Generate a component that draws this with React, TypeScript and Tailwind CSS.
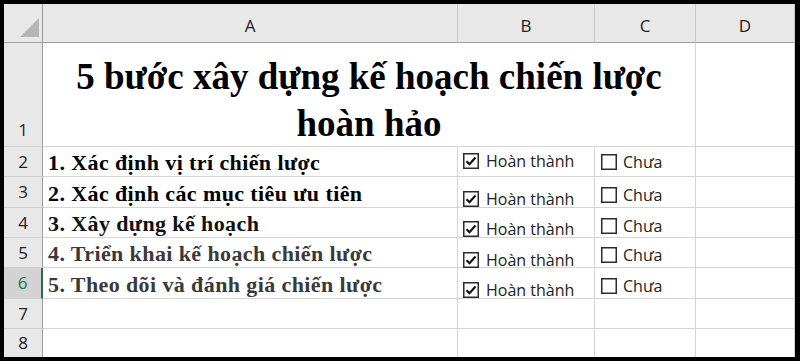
import React from "react";

const ROWS = [
  { n: 2, text: "1. Xác định vị trí chiến lược", h: "h-[30px]", color: "text-black", b: "pt-[6px]", c: "pt-[7px]" },
  { n: 3, text: "2. Xác định các mục tiêu ưu tiên", h: "h-[31px]", color: "text-black", b: "pt-[14px]", c: "pt-[10px]" },
  { n: 4, text: "3. Xây dựng kế hoạch", h: "h-[30px]", color: "text-[#111]", b: "pt-[13px]", c: "pt-[10px]" },
  { n: 5, text: "4. Triển khai kế hoạch chiến lược", h: "h-[30px]", color: "text-[#3a3a3a]", b: "pt-[14px]", c: "pt-[9px]" },
  { n: 6, text: "5. Theo dõi và đánh giá chiến lược", h: "h-[31px]", color: "text-[#3a3a3a]", b: "pt-[14px]", c: "pt-[10px]" },
];

const ui = "font-['Open_Sans','Liberation_Sans',sans-serif]";
const serif = "font-['Liberation_Serif','Times_New_Roman',serif]";

function Box({ checked }: { checked?: boolean }) {
  return (
    <svg width="16" height="16" viewBox="0 0 16 16" className="shrink-0">
      <rect x="0.75" y="0.75" width="14.5" height="14.5" fill="white" stroke="#2b2b2b" strokeWidth="1.5" />
      {checked && <path d="M3.5 8.2 L6.5 11.2 L12.5 4.6" fill="none" stroke="#111" strokeWidth="2.2" />}
    </svg>
  );
}

function RowHead({ n, h, active }: { n: number; h: string; active?: boolean }) {
  return (
    <div
      className={`${h} ${ui} flex items-center justify-center text-[17px] border-b border-[#d0d0d0] ${
        active
          ? "bg-[#d3d3d3] text-[#217346] border-r-2 border-r-[#217346]"
          : "bg-[#e8e8e8] text-[#222] border-r border-r-[#9e9e9e]"
      }`}
    >
      {n}
    </div>
  );
}

export default function App() {
  const cell = "border-r border-b border-[#d4d4d4]";
  return (
    <div className="w-[800px] h-[361px] bg-white border-black border-t-4 border-l-4 border-b-4 border-r-[5px] overflow-hidden">
      <div className="grid grid-cols-[39px_415px_137px_101px_99px]">
        {/* column headers */}
        <div className="h-[39px] bg-[#e8e8e8] border-r border-b border-[#9e9e9e] relative">
          <svg width="20" height="20" viewBox="0 0 20 20" className="absolute left-[16px] top-[14px]">
            <polygon points="19,0 19,19 0,19" fill="#b5b5b5" />
          </svg>
        </div>
        {["A", "B", "C", "D"].map((l) => (
          <div
            key={l}
            className={`h-[39px] bg-[#e8e8e8] border-b border-b-[#9e9e9e] border-r border-r-[#c8c8c8] flex items-center justify-center pt-[6px] text-[17px] text-[#222] ${ui}`}
          >
            {l}
          </div>
        ))}

        {/* row 1 */}
        <div className={`h-[104px] bg-[#e8e8e8] border-r border-r-[#9e9e9e] border-b border-b-[#d0d0d0] flex items-end justify-center pb-[4px] text-[17px] text-[#222] ${ui}`}>
          1
        </div>
        <div className={`col-span-3 h-[104px] ${cell} flex items-end justify-center`}>
          <div className={`${serif} font-bold text-[37px] leading-[47px] text-center text-black -mb-[1px] whitespace-nowrap`}>
            5 bước xây dựng kế hoạch chiến lược
            <br />
            hoàn hảo
          </div>
        </div>
        <div className={`h-[104px] ${cell}`} />

        {ROWS.map((r) => (
          <React.Fragment key={r.n}>
            <RowHead n={r.n} h={r.h} active={r.n === 6} />
            <div className={`${r.h} ${cell} flex items-end pl-[5px] pb-[2px]`}>
              <span className={`${serif} font-bold text-[22px] tracking-[0.4px] leading-[22px] whitespace-nowrap ${r.color}`}>{r.text}</span>
            </div>
            <div className={`${r.h} ${cell} ${r.b} pl-[5px]`}>
              <div className={`flex items-center gap-[7px] ${ui} text-[16px] leading-[16px] text-[#222]`}>
                <Box checked />
                <span>Hoàn thành</span>
              </div>
            </div>
            <div className={`${r.h} ${cell} ${r.c} pl-[6px]`}>
              <div className={`flex items-center gap-[6px] ${ui} text-[16px] leading-[16px] text-[#222]`}>
                <Box />
                <span>Chưa</span>
              </div>
            </div>
            <div className={`${r.h} ${cell}`} />
          </React.Fragment>
        ))}

        {[{ n: 7, h: "h-[30px]" }, { n: 8, h: "h-[29px]" }].map((r) => (
          <React.Fragment key={r.n}>
            <RowHead n={r.n} h={r.h} />
            <div className={`${r.h} ${cell}`} />
            <div className={`${r.h} ${cell}`} />
            <div className={`${r.h} ${cell}`} />
            <div className={`${r.h} ${cell}`} />
          </React.Fragment>
        ))}
      </div>
    </div>
  );
}
